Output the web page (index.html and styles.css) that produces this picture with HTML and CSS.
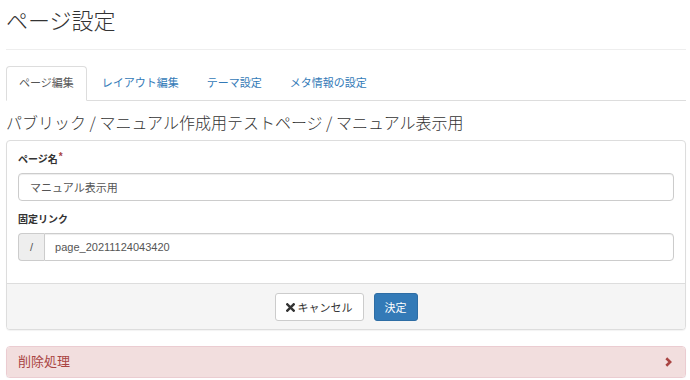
FILE: index.html
```html
<!DOCTYPE html>
<html lang="ja">
<head>
    <meta charset="UTF-8">
    <meta name="viewport" content="width=device-width, initial-scale=1.0">
    <title>ページ設定</title>
    <link rel="stylesheet" href="styles.css">
</head>
<body>

<div class="page">
    <h1 class="page-title">ページ設定</h1>
    <hr class="title-rule">

    <!-- Tabs -->
    <ul class="nav-tabs">
        <li class="active"><a href="#">ページ編集</a></li>
        <li><a href="#">レイアウト編集</a></li>
        <li><a href="#">テーマ設定</a></li>
        <li><a href="#">メタ情報の設定</a></li>
    </ul>

    <h3 class="page-path">パブリック / マニュアル作成用テストページ / マニュアル表示用</h3>

    <!-- Edit form -->
    <div class="panel">
        <div class="panel-body">
            <div class="form-group">
                <label class="control-label">ページ名<span class="required">*</span></label>
                <input type="text" class="form-control" value="マニュアル表示用">
            </div>
            <div class="form-group">
                <label class="control-label">固定リンク</label>
                <div class="input-group">
                    <span class="input-group-addon">/</span>
                    <input type="text" class="form-control" value="page_20211124043420">
                </div>
            </div>
        </div>
        <div class="panel-footer">
            <button class="btn btn-default">
                <svg class="icon-times" width="9" height="9" viewBox="0 0 9 9"><path d="M1.3 1.3 L7.7 7.7 M7.7 1.3 L1.3 7.7" stroke="#333" stroke-width="2.4" stroke-linecap="square"/></svg>キャンセル
            </button>
            <button class="btn btn-primary">決定</button>
        </div>
    </div>

    <!-- Delete -->
    <div class="panel panel-danger">
        <div class="panel-heading">
            <span class="panel-title">削除処理</span>
            <svg width="7" height="10" viewBox="0 0 7 10"><path d="M1.3 1.2 L5.2 5 L1.3 8.8" fill="none" stroke="#a94442" stroke-width="2.6"/></svg>
        </div>
    </div>
</div>

</body>
</html>
```

FILE: styles.css
```css
body {
    margin: 0;
    background-color: #fff;
    color: #333;
    font-family: "Liberation Sans", "Noto Sans CJK JP", sans-serif;
    font-size: 11px;
}
.page {
    padding: 9px 4px 0 6px;
}
.page-title {
    margin: 0;
    font-size: 22px;
    line-height: 26px;
    font-weight: 300;
    color: #333;
}
.title-rule {
    border: 0;
    border-top: 1px solid #eee;
    height: 0;
    margin: 14px 0 16px;
}
/* Tabs */
.nav-tabs {
    display: flex;
    margin: 0;
    padding: 0;
    list-style: none;
    border-bottom: 1px solid #ddd;
}
.nav-tabs li {
    margin-right: 2px;
    margin-bottom: -1px;
}
.nav-tabs a {
    display: block;
    padding: 8px 12px;
    line-height: 17px;
    border: 1px solid transparent;
    border-radius: 4px 4px 0 0;
    color: #337ab7;
    text-decoration: none;
}
.nav-tabs li.active a {
    color: #555;
    background-color: #fff;
    border-color: #ddd #ddd transparent;
}
.page-path {
    margin: 11px 0 8px;
    font-family: "Noto Sans CJK JP", sans-serif;
    font-size: 16px;
    line-height: 20px;
    font-weight: 300;
    color: #333;
}
/* Panels */
.panel {
    border: 1px solid #ddd;
    border-radius: 4px;
    background-color: #fff;
    box-shadow: 0 1px 1px rgba(0, 0, 0, 0.05);
}
.panel-body {
    padding: 11px 11px 11px;
}
.form-group {
    margin-bottom: 11px;
}
.control-label {
    display: block;
    margin-bottom: 5px;
    font-size: 10px;
    line-height: 16px;
    font-weight: bold;
    color: #333;
}
.required {
    color: #a94442;
    position: relative;
    top: -3px;
    margin-left: 1px;
}
.form-control {
    display: block;
    width: 100%;
    box-sizing: border-box;
    height: 28px;
    padding: 0 11px;
    font: inherit;
    font-size: 11px;
    color: #555;
    background-color: #fff;
    border: 1px solid #ccc;
    border-radius: 4px;
    box-shadow: inset 0 1px 1px rgba(0, 0, 0, 0.075);
    outline: none;
}
.input-group {
    display: flex;
}
.input-group-addon {
    display: flex;
    align-items: center;
    box-sizing: border-box;
    height: 28px;
    padding: 0 11px;
    color: #555;
    background-color: #eee;
    border: 1px solid #ccc;
    border-right: 0;
    border-radius: 4px 0 0 4px;
}
.input-group .form-control {
    flex-grow: 1;
    padding-left: 10px;
    border-radius: 0 4px 4px 0;
}
.panel-footer {
    padding: 9px 11px 8px;
    background-color: #f5f5f5;
    border-top: 1px solid #ddd;
    border-radius: 0 0 3px 3px;
    display: flex;
    justify-content: center;
    gap: 10px;
}
.btn {
    display: inline-flex;
    align-items: center;
    box-sizing: border-box;
    height: 28px;
    padding: 0 10px;
    font: inherit;
    font-size: 11px;
    border: 1px solid transparent;
    border-radius: 3px;
    cursor: pointer;
}
.btn-default {
    color: #333;
    background-color: #fff;
    border-color: #ccc;
}
.icon-times {
    margin-right: 3px;
}
.btn-primary {
    color: #fff;
    background-color: #337ab7;
    border-color: #2e6da4;
}
.panel-danger {
    margin-top: 16px;
    border-color: #ebccd1;
}
.panel-heading {
    display: flex;
    justify-content: space-between;
    align-items: center;
    padding: 7px 13px 7px 11px;
    line-height: 16px;
    background-color: #f2dede;
    border-radius: 3px;
}
.panel-title {
    font-size: 13px;
    color: #a94442;
}
```
